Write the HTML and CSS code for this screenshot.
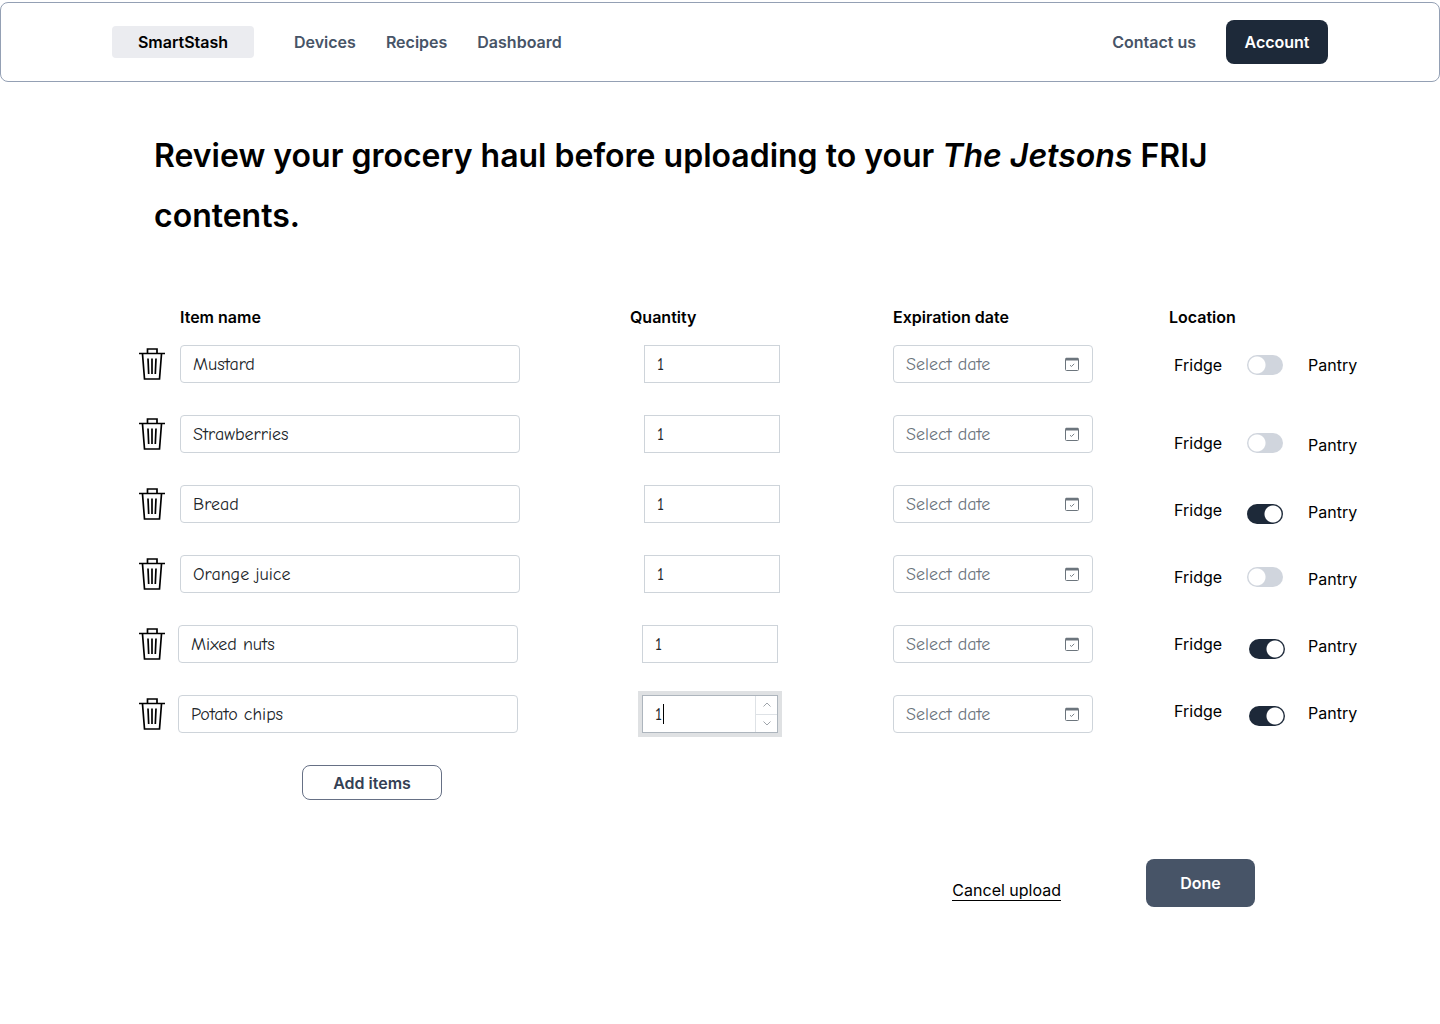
FILE: index.html
```html
<!DOCTYPE html>
<html lang="en">
<head>
    <meta charset="utf-8">
    <title>SmartStash - Review groceries</title>
    <meta name="viewport" content="width=device-width, initial-scale=1">
    <link rel="stylesheet" href="styles.css">
</head>
<body>
    <!-- icons used in every row -->
    <svg class="icon-defs" width="0" height="0" aria-hidden="true">
        <symbol id="trash" viewBox="0 0 26 32">
            <path d="M0 5.500h26M8.500 5V1h9.500v4M3.500 6l2 25h15l2-25M9 10.500l.7 15.500M13 10.500V26M17 10.500l-.7 15.500" fill="none" stroke="#000" stroke-width="1.700"/>
        </symbol>
        <symbol id="calendar" viewBox="0 0 14 14">
            <rect x=".5" y="1.500" width="13" height="12" rx="1" fill="none" stroke="#6c757d"/>
            <path d="M.5 1.500C.5 1 1 .8 1.500.8h11c.5 0 1 .2 1 .7v2H.5z" fill="#6c757d"/>
            <path d="M5 8.200l1.500 1.300L9.200 6.800" fill="none" stroke="#6c757d" stroke-width=".9"/>
        </symbol>
    </svg>

    <header class="navbar">
        <nav class="nav-links">
            <a href="#" class="brand">SmartStash</a>
            <a href="#">Devices</a>
            <a href="#">Recipes</a>
            <a href="#">Dashboard</a>
        </nav>
        <div class="nav-links">
            <a href="#">Contact us</a>
            <button class="button account">Account</button>
        </div>
    </header>

    <main>
        <h1>Review your grocery haul before uploading to your <em>The Jetsons</em> FRIJ contents.</h1>

        <form class="haul">
            <div class="items">
                <div class="row heading">
                    <span></span>
                    <span>Item name</span>
                    <span>Quantity</span>
                    <span>Expiration date</span>
                </div>
                <div class="row">
                    <button type="button" class="delete" aria-label="Delete Mustard"><svg><use href="#trash"/></svg></button>
                    <input class="field name" type="text" value="Mustard" aria-label="Item name">
                    <div class="quantity"><input class="field" type="number" value="1" aria-label="Quantity"></div>
                    <div class="date"><input class="field" type="text" placeholder="Select date" aria-label="Expiration date"><svg><use href="#calendar"/></svg></div>
                </div>
                <div class="row">
                    <button type="button" class="delete" aria-label="Delete Strawberries"><svg><use href="#trash"/></svg></button>
                    <input class="field name" type="text" value="Strawberries" aria-label="Item name">
                    <div class="quantity"><input class="field" type="number" value="1" aria-label="Quantity"></div>
                    <div class="date"><input class="field" type="text" placeholder="Select date" aria-label="Expiration date"><svg><use href="#calendar"/></svg></div>
                </div>
                <div class="row">
                    <button type="button" class="delete" aria-label="Delete Bread"><svg><use href="#trash"/></svg></button>
                    <input class="field name" type="text" value="Bread" aria-label="Item name">
                    <div class="quantity"><input class="field" type="number" value="1" aria-label="Quantity"></div>
                    <div class="date"><input class="field" type="text" placeholder="Select date" aria-label="Expiration date"><svg><use href="#calendar"/></svg></div>
                </div>
                <div class="row">
                    <button type="button" class="delete" aria-label="Delete Orange juice"><svg><use href="#trash"/></svg></button>
                    <input class="field name" type="text" value="Orange juice" aria-label="Item name">
                    <div class="quantity"><input class="field" type="number" value="1" aria-label="Quantity"></div>
                    <div class="date"><input class="field" type="text" placeholder="Select date" aria-label="Expiration date"><svg><use href="#calendar"/></svg></div>
                </div>
                <div class="row recent">
                    <button type="button" class="delete" aria-label="Delete Mixed nuts"><svg><use href="#trash"/></svg></button>
                    <input class="field name" type="text" value="Mixed nuts" aria-label="Item name">
                    <div class="quantity"><input class="field" type="number" value="1" aria-label="Quantity"></div>
                    <div class="date"><input class="field" type="text" placeholder="Select date" aria-label="Expiration date"><svg><use href="#calendar"/></svg></div>
                </div>
                <div class="row recent">
                    <button type="button" class="delete" aria-label="Delete Potato chips"><svg><use href="#trash"/></svg></button>
                    <input class="field name" type="text" value="Potato chips" aria-label="Item name">
                    <div class="quantity active">
                        <input class="field" type="number" value="1" aria-label="Quantity">
                        <span class="caret"></span>
                        <div class="stepper">
                            <button type="button" aria-label="More"><svg viewBox="0 0 8 5"><path d="M.5 4.500L4 1l3.500 3.500"/></svg></button>
                            <button type="button" aria-label="Less"><svg viewBox="0 0 8 5"><path d="M.5.5L4 4 7.500.5"/></svg></button>
                        </div>
                    </div>
                    <div class="date"><input class="field" type="text" placeholder="Select date" aria-label="Expiration date"><svg><use href="#calendar"/></svg></div>
                </div>
                <button type="button" class="button add">Add items</button>
            </div>

            <div class="locations">
                <div class="heading">Location</div>
                <label class="place"><span>Fridge</span><input type="checkbox"><span>Pantry</span></label>
                <label class="place"><span>Fridge</span><input type="checkbox"><span>Pantry</span></label>
                <label class="place"><span>Fridge</span><input type="checkbox" checked><span>Pantry</span></label>
                <label class="place"><span>Fridge</span><input type="checkbox"><span>Pantry</span></label>
                <label class="place recent"><span>Fridge</span><input type="checkbox" checked><span>Pantry</span></label>
                <label class="place recent"><span>Fridge</span><input type="checkbox" checked><span>Pantry</span></label>
            </div>
        </form>

        <div class="actions">
            <a href="#" class="cancel">Cancel upload</a>
            <button class="button done">Done</button>
        </div>
    </main>
</body>
</html>
```
FILE: styles.css
```css
* {
    box-sizing: border-box;
}
body {
    margin: 0;
    font-family: Inter, sans-serif;
    font-size: 16px;
    line-height: 20px;
    color: #000;
    background-color: #fff;
}
.icon-defs {
    position: absolute;
}
.navbar {
    display: flex;
    justify-content: space-between;
    align-items: center;
    height: 80px;
    margin-top: 2px;
    padding: 0 111px;
    border: 1px solid #94a0b4;
    border-radius: 8px;
}
.nav-links {
    display: flex;
    align-items: center;
    gap: 30px;
}
.nav-links a {
    color: #475467;
    font-weight: 600;
    text-decoration: none;
}
.nav-links .brand {
    width: 142px;
    margin-right: 10px;
    padding: 6px 0;
    border-radius: 4px;
    background-color: #ebecf0;
    color: #000;
    text-align: center;
}
.button {
    border: none;
    border-radius: 8px;
    font: 600 16px Inter, sans-serif;
    cursor: pointer;
}
.account {
    width: 102px;
    height: 44px;
    background-color: #1d2939;
    color: #fff;
}
main {
    padding: 44px 83px 40px 139px;
}
h1 {
    max-width: 1100px;
    margin: 0 0 61px 15px;
    font-size: 32px;
    font-weight: 600;
    line-height: 60px;
}
.haul {
    display: grid;
    grid-template-columns: minmax(0, 1030fr) minmax(188px, 188fr);
}
.row {
    display: grid;
    grid-template-columns: 41px 450fr 263fr 276fr;
    align-items: center;
    margin-bottom: 32px;
}
.heading {
    height: 20px;
    margin-bottom: 18px;
    font-weight: 600;
}
.delete {
    width: 26px;
    height: 32px;
    padding: 0;
    border: none;
    background: none;
    cursor: pointer;
}
.delete svg {
    display: block;
    width: 26px;
    height: 32px;
}

/* text boxes */
.field {
    width: 100%;
    height: 38px;
    padding: 0 12px;
    border: 1px solid #ced4da;
    border-radius: 4px;
    background-color: #fff;
    color: #212529;
    font: 18px "Comic Sans MS", "Comic Neue", "Noto Sans", sans-serif;
    appearance: none;
}
.field::placeholder {
    color: #6c757d;
    opacity: 1;
}
.name {
    width: 340px;
}
.quantity {
    position: relative;
    width: 136px;
    margin-left: 14px;
}
.quantity .field {
    display: block;
    border-radius: 0;
    appearance: textfield;
}
.quantity .field::-webkit-inner-spin-button {
    appearance: none;
}
.active .field {
    border-color: #adb5bd;
    box-shadow: 0 0 0 4px #dfe1e3;
}
.caret {
    position: absolute;
    top: 9px;
    left: 21px;
    width: 1px;
    height: 20px;
    background-color: #000;
}
.stepper {
    position: absolute;
    top: 1px;
    right: 1px;
    bottom: 1px;
    display: flex;
    flex-direction: column;
    width: 22px;
    border-left: 1px solid #dee2e6;
}
.stepper button {
    display: flex;
    flex: 1;
    align-items: center;
    justify-content: center;
    padding: 0;
    border: none;
    background: none;
}
.stepper button + button {
    border-top: 1px solid #dee2e6;
}
.stepper svg {
    width: 8px;
    height: 5px;
    fill: none;
    stroke: #868e96;
    stroke-width: 0.8;
}
.date {
    position: relative;
    width: 200px;
}
.date .field {
    display: block;
}
.date svg {
    position: absolute;
    top: 12px;
    right: 14px;
    width: 14px;
    height: 14px;
}
.recent .name {
    margin-left: -2px;
}
.recent .quantity {
    margin-left: 12px;
}
.add {
    display: block;
    width: 140px;
    height: 35px;
    margin-left: 163px;
    border: 1px solid #667085;
    background-color: #fff;
    color: #344054;
}

/* fridge / pantry switches */
.place {
    display: grid;
    grid-template-columns: 73px 61px auto;
    align-items: center;
    height: 40px;
    margin: 0 0 27px 5px;
}
.heading + .place {
    margin-bottom: 40px;
}
.place input {
    width: 36px;
    height: 20px;
    margin: 0;
    border-radius: 10px;
    background: radial-gradient(circle at 10px 10px, #fff 8px, #d0d5dd 9px);
    appearance: none;
    cursor: pointer;
}
.place input:checked {
    background: radial-gradient(circle at 26px 10px, #fff 8px, #1d2939 9px);
}
.place + .place span:first-child {
    margin-bottom: 4px;
}
.place + .place input {
    margin-bottom: 4px;
}
.place + .place input:checked {
    margin: 4px 0 0;
}
.place.recent input:checked {
    margin: 6px 0 0 2px;
}

.actions {
    display: flex;
    justify-content: flex-end;
    align-items: flex-end;
    gap: 85px;
    margin-top: 59px;
    padding-right: 102px;
}
.cancel {
    margin-bottom: 6px;
    border-bottom: 1px solid #000;
    color: #000;
    text-decoration: none;
}
.done {
    width: 109px;
    height: 48px;
    background-color: #475467;
    color: #fff;
}
```
